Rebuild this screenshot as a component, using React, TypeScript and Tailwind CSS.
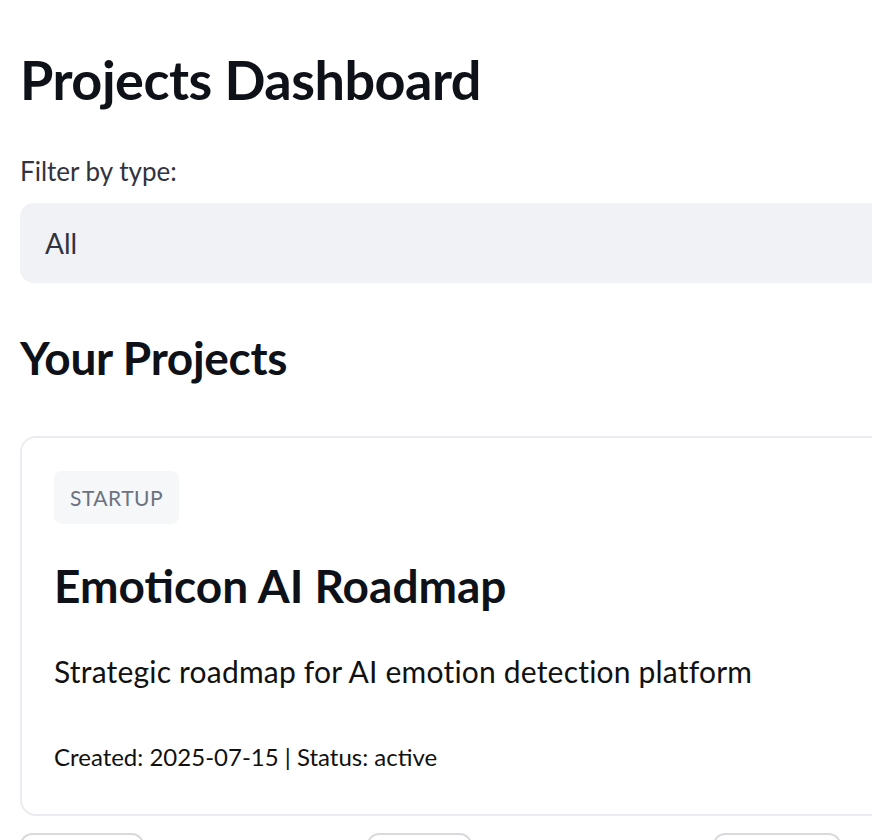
import React from 'react';

const font = { fontFamily: '"Source Sans Pro", Lato, "Noto Sans", sans-serif' };

export default function App() {
  return (
    <div className="h-[840px] w-full overflow-hidden bg-white text-[#0e1117]" style={font}>
      <div className="w-[1008px] ml-5 pt-[50px]">
        <h1 className="text-[54px] font-bold leading-[60px] tracking-[-0.5px]">Projects Dashboard</h1>

        <div className="mt-[44px]">
          <label className="block text-[26px] leading-[34px] text-[#31333f]">Filter by type:</label>
          <div className="mt-[15px] h-[80px] rounded-[14px] bg-[#f0f2f6] flex items-center px-[25px]">
            <span className="text-[28px] text-[#31333f]">All</span>
          </div>
        </div>

        <h2 className="mt-[47px] text-[46px] font-bold leading-[56px] tracking-[-0.3px]">Your Projects</h2>

        <div className="mt-[50px] h-[380px] rounded-[16px] border-2 border-[#ececf0] px-[32px] pt-[33px]">
          <span className="inline-block rounded-[8px] bg-[#f6f7f8] px-[16px] py-[12px] text-[21px] leading-[29px] tracking-[0.5px] text-[#6b7280]">
            STARTUP
          </span>
          <h3 className="mt-[34px] text-[46px] font-bold leading-[56px]">Emoticon AI Roadmap</h3>
          <p className="mt-[37px] text-[30px] leading-[40px] text-[#111] tracking-[0.2px]">Strategic roadmap for AI emotion detection platform</p>
          <p className="mt-[50px] text-[24px] leading-[32px] text-[#111]">Created: 2025-07-15 | Status: active</p>
        </div>

        <div className="mt-[17px] grid grid-cols-3 gap-[32px]">
          <div>
            <button className="h-[60px] w-[124px] rounded-[12px] border-2 border-[#d9d9de] bg-white" />
          </div>
          <div>
            <button className="h-[60px] w-[105px] rounded-[12px] border-2 border-[#d9d9de] bg-white" />
          </div>
          <div>
            <button className="h-[60px] w-[128px] rounded-[12px] border-2 border-[#d9d9de] bg-white" />
          </div>
        </div>
      </div>
    </div>
  );
}
